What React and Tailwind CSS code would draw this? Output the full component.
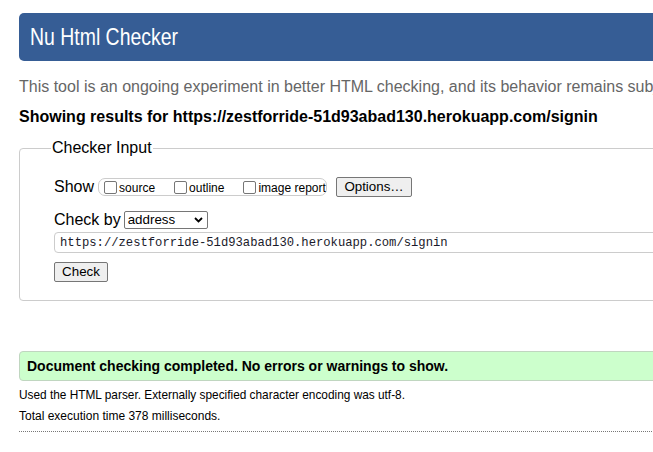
import React from 'react';

const Box = ({ label }) => (
  <label className="flex items-center">
    <input type="checkbox" className="appearance-none w-[13px] h-[13px] border border-[#767676] rounded-[2px] bg-white m-0" />
    <span className="ml-[2px] mt-[2px] text-[12px] leading-[14px] text-black">{label}</span>
  </label>
);

export default function App() {
  return (
    <div className="w-[653px] h-[452px] overflow-hidden bg-white font-['Liberation_Sans',Arial,sans-serif] text-black">
      <div className="w-[1000px] pl-[19px] pt-[13px]">
        {/* title bar */}
        <h1 className="h-[48px] bg-[#365d95] rounded-l-[5px] pl-[11px] flex items-center text-white text-[24px]">
          <span className="inline-block scale-x-[0.81] origin-left">Nu Html Checker</span>
        </h1>

        <p className="mt-[16px] h-[20px] leading-[20px] text-[16px] text-[#666] whitespace-nowrap">
          This tool is an ongoing experiment in better HTML checking, and its behavior remains subject to change
        </p>

        <p className="mt-[10px] h-[20px] leading-[20px] text-[16px] font-bold whitespace-nowrap">
          Showing results for https://zestforride-51d93abad130.herokuapp.com/signin
        </p>

        {/* checker input */}
        <fieldset className="mt-[12px] border border-[#cccccc] rounded-[4px] pl-[32px] pb-[18px]">
          <legend className="-ml-[1px] px-[1px] text-[16px] leading-[18px]">Checker Input</legend>

          <div className="mt-[20px] ml-[2px] h-[20px] flex items-center">
            <span className="text-[16px] leading-[18px]">Show</span>
            <div className="ml-[4px] h-[18px] w-[229px] border border-[#cccccc] rounded-[7px] flex items-center pl-[5px] gap-[19px]">
              <Box label="source" />
              <Box label="outline" />
              <Box label="image report" />
            </div>
            <button className="ml-[9px] w-[76px] h-[20px] bg-[#efefef] border border-[#767676] rounded-[2px] text-[13.33px] leading-[16px]">
              Options…
            </button>
          </div>

          <div className="mt-[14px] ml-[2px] h-[18px] flex items-center">
            <span className="text-[16px] leading-[18px]">Check by</span>
            <div className="ml-[3px] w-[84px] h-[18px] border border-[#767676] rounded-[2px] flex items-center justify-between pl-[3px] pr-[4px]">
              <span className="text-[13.33px] leading-[16px]">address</span>
              <svg width="9" height="6" viewBox="0 0 9 6" fill="none">
                <path d="M1 1l3.5 3.5L8 1" stroke="#000" strokeWidth="1.8" />
              </svg>
            </div>
          </div>

          <div className="mt-[3px] ml-[2px] h-[21px] border border-[#cccccc] rounded-[4px] flex items-center pl-[5px]">
            <span className="font-['Liberation_Mono',monospace] text-[12.2px] leading-[14px] text-[#1a1a2a]">
              https://zestforride-51d93abad130.herokuapp.com/signin
            </span>
          </div>

          <button className="mt-[9px] ml-[2px] w-[54px] h-[20px] bg-[#efefef] border border-[#767676] rounded-[2px] text-[13.33px] leading-[16px] block">
            Check
          </button>
        </fieldset>

        {/* result */}
        <div className="mt-[50px] h-[30px] bg-[#ccffcc] border border-[#c0d6c0] rounded-[4px] pl-[7px] flex items-center">
          <span className="text-[14px] font-bold whitespace-nowrap">
            Document checking completed. No errors or warnings to show.
          </span>
        </div>

        <p className="mt-[6px] h-[16px] leading-[16px] text-[11.85px] whitespace-nowrap">
          Used the HTML parser. Externally specified character encoding was utf-8.
        </p>
        <p className="mt-[5px] h-[16px] leading-[16px] text-[12px] whitespace-nowrap">
          Total execution time 378 milliseconds.
        </p>
        <div className="mt-[7px] border-t border-dotted border-[#777]" />
      </div>
    </div>
  );
}
